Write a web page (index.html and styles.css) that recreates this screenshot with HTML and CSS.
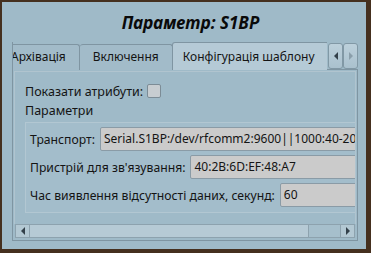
FILE: index.html
```html
<!DOCTYPE html>
<html lang="uk">

<head>
    <meta charset="UTF-8">
    <meta name="viewport" content="width=device-width, initial-scale=1.0">
    <title>Параметр: S1BP</title>
    <link rel="stylesheet" href="styles.css">
</head>

<body>
    <div class="window">
        <h1 class="title">Параметр: S1BP</h1>

        <div class="tabbar">
            <div class="tabs">
                <div class="tab tab-first">Архівація</div>
                <div class="tab">Включення</div>
                <div class="tab active">Конфігурація шаблону</div>
            </div>
            <div class="tab-scroll">
                <div class="scroll-btn"><span class="arrow-left"></span></div>
                <div class="scroll-btn"><span class="arrow-right disabled"></span></div>
            </div>
        </div>

        <div class="panel">
            <div class="panel-body">
                <div class="attr-row">
                    <span>Показати атрибути:</span>
                    <span class="checkbox"></span>
                </div>
                <div class="section-label">Параметри</div>

                <div class="group">
                    <div class="field">
                        <span class="field-label">Транспорт:</span>
                        <div class="input">Serial.S1BP:/dev/rfcomm2:9600||1000:40-20</div>
                    </div>
                    <div class="field">
                        <span class="field-label">Пристрій для зв'язування:</span>
                        <div class="input">40:2B:6D:EF:48:A7</div>
                    </div>
                    <div class="field">
                        <span class="field-label">Час виявлення відсутності даних, секунд:</span>
                        <div class="input">60</div>
                    </div>
                </div>
            </div>

            <div class="hscroll">
                <div class="hs-btn"><span class="arrow-left"></span></div>
                <div class="hs-thumb"></div>
                <div class="hs-track"></div>
                <div class="hs-btn"><span class="arrow-right"></span></div>
            </div>
        </div>
    </div>
</body>

</html>
```

FILE: styles.css
```css
* {
    box-sizing: border-box;
}

body {
    margin: 0;
    font-family: 'Noto Sans', 'DejaVu Sans', sans-serif;
    font-size: 12.5px;
    color: #141414;
    background-color: #9fbac8;
}

.window {
    width: 371px;
    height: 253px;
    padding: 0 8px 0 10px;
    background-color: #9fbac8;
    border-style: solid;
    border-color: #45301f;
    border-width: 2px 5px 4px 2px;
    overflow: hidden;
}

.title {
    margin: 0;
    height: 40px;
    padding-left: 11px;
    line-height: 42px;
    text-align: center;
    font-size: 17px;
    font-weight: bold;
    font-style: italic;
    color: #0a0a0a;
}

.tabbar {
    display: flex;
    height: 28px;
    position: relative;
    z-index: 1;
    font-size: 12px;
}

.tabs {
    display: flex;
    align-items: flex-end;
    width: 316px;
    overflow: hidden;
    border-left: 1px solid #7f95a2;
}

.tab {
    flex-shrink: 0;
    height: 26px;
    line-height: 24px;
    padding: 0 13px;
    background-color: #a2bbc9;
    border: 1px solid #7f95a2;
    border-bottom: none;
    border-left: none;
    border-radius: 3px 3px 0 0;
    white-space: nowrap;
}

.tab-first {
    margin-left: -15px;
}

.tab.active {
    height: 28px;
    line-height: 27px;
    padding: 0 13px 0 10px;
    background-color: #b5cad6;
    border-left: 1px solid #7f95a2;
    margin-left: -1px;
}

.tab-scroll {
    display: flex;
    margin-left: 1px;
    padding-top: 1px;
}

.scroll-btn {
    width: 15px;
    height: 26px;
    display: flex;
    align-items: center;
    justify-content: center;
    background: linear-gradient(#bcd0db, #aac1ce);
    border: 1px solid #8198a5;
    border-radius: 3px;
}

.arrow-left,
.arrow-right {
    width: 0;
    height: 0;
    border-top: 4px solid transparent;
    border-bottom: 4px solid transparent;
}

.arrow-left {
    border-right: 4px solid #33404a;
}

.arrow-right {
    border-left: 4px solid #33404a;
}

.arrow-right.disabled {
    border-left-color: #8a9eaa;
}

.panel {
    width: 346px;
    height: 172px;
    margin-top: -1px;
    border: 1px solid #7f95a2;
    padding: 1px;
    display: flex;
    flex-direction: column;
}

.panel-body {
    flex: 1;
    overflow: hidden;
    border: 1px solid #b0c4cf;
    border-bottom: none;
    padding: 11px 0 0 10px;
}

.attr-row {
    display: flex;
    align-items: center;
    height: 16px;
    gap: 4px;
}

.checkbox {
    width: 14px;
    height: 14px;
    background-color: #c7cdd1;
    border: 1px solid #7c8c96;
    border-radius: 2px;
}

.section-label {
    margin-top: 2px;
    height: 20px;
    line-height: 20px;
}

.group {
    margin-top: 1px;
    width: 360px;
    padding: 4px 0 5px 4px;
    background-color: #a3bdcb;
    border-top: 1px solid #b2c7d2;
    border-left: 1px solid #b2c7d2;
    border-bottom: 1px solid #b2c7d2;
    display: flex;
    flex-direction: column;
    gap: 4px;
}

.field {
    display: flex;
    align-items: center;
    gap: 5px;
    white-space: nowrap;
    font-size: 12.2px;
}

.input {
    flex: 1;
    height: 24px;
    line-height: 22px;
    padding: 0 3px;
    font-size: 12px;
    background-color: #cbcbcb;
    border: 1px solid #8a9ba6;
    border-radius: 2px;
    overflow: hidden;
}

.hscroll {
    display: flex;
    height: 14px;
    margin: 0 1px 1px 1px;
    border: 1px solid #8da2ae;
}

.hs-btn {
    width: 13px;
    display: flex;
    align-items: center;
    justify-content: center;
    background-color: #b3c8d3;
}

.hs-thumb {
    width: 280px;
    background-color: #b6cad5;
    border-left: 1px solid #8da2ae;
    border-right: 1px solid #8da2ae;
}

.hs-track {
    flex: 1;
    background-color: #a6bfcc;
    border-right: 1px solid #8da2ae;
}
```
